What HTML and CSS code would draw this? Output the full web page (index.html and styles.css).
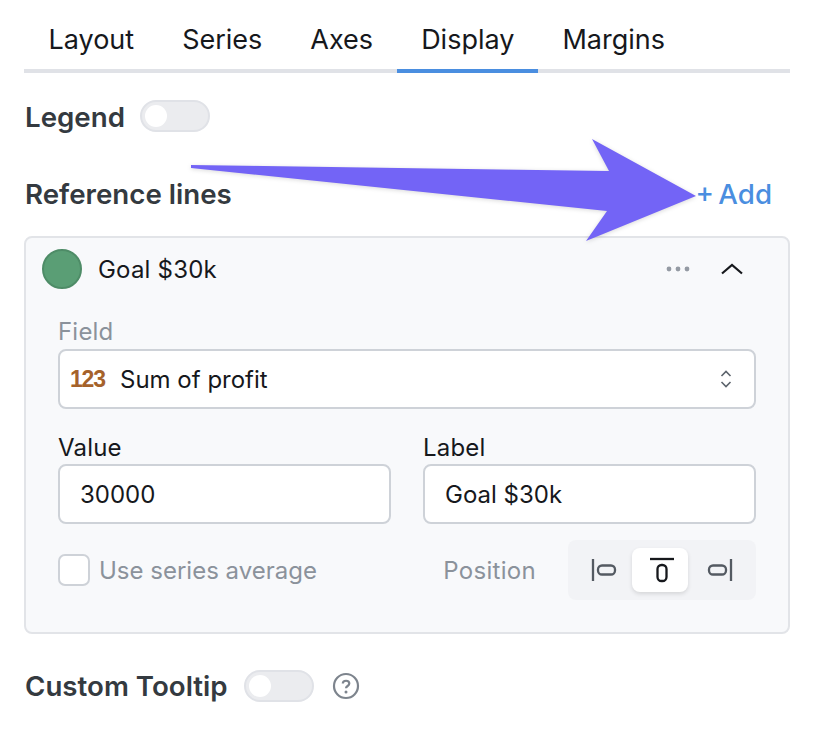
FILE: index.html
```html
<!DOCTYPE html>
<html lang="en">
<head>
  <meta charset="UTF-8">
  <title>Display settings</title>
  <link rel="stylesheet" href="styles.css">
</head>
<body>

<div class="panel">
  <div class="tabs">
    <div class="tab">Layout</div>
    <div class="tab">Series</div>
    <div class="tab">Axes</div>
    <div class="tab active">Display</div>
    <div class="tab">Margins</div>
  </div>

  <div class="row legend-row">
    <span class="heading">Legend</span>
    <span class="toggle"><span class="knob"></span></span>
  </div>

  <div class="row ref-row">
    <span class="heading">Reference lines</span>
    <span class="add">+ Add</span>
  </div>

  <div class="card">
    <div class="card-head">
      <span class="swatch"></span>
      <span class="card-title">Goal $30k</span>
      <svg class="dots" width="24" height="6" viewBox="0 0 24 6">
        <circle cx="3" cy="3" r="2.4" />
        <circle cx="12" cy="3" r="2.4" />
        <circle cx="21" cy="3" r="2.4" />
      </svg>
      <svg class="chevron" width="24" height="12" viewBox="0 0 24 12">
        <path d="M2 10.500 L12 2 L22 10.500" />
      </svg>
    </div>

    <label class="field-label muted">Field</label>
    <div class="input select">
      <span class="type-icon">123</span>
      <span class="select-text">Sum of profit</span>
      <svg class="updown" width="12" height="20" viewBox="0 0 12 20">
        <path d="M1.5 7 L6 2.5 L10.5 7 M1.5 13 L6 17.5 L10.5 13" />
      </svg>
    </div>

    <div class="two-col">
      <div>
        <label class="field-label">Value</label>
        <div class="input">30000</div>
      </div>
      <div>
        <label class="field-label">Label</label>
        <div class="input">Goal $30k</div>
      </div>
    </div>

    <div class="options">
      <div class="check-wrap">
        <span class="checkbox"></span>
        <span class="muted">Use series average</span>
      </div>
      <div class="position">
        <span class="muted pos-label">Position</span>
        <div class="segments">
          <div class="segment">
            <svg width="26" height="26" viewBox="0 0 26 26">
              <path d="M2 2 V24" />
              <rect x="7" y="8.5" width="17" height="9" rx="4" />
            </svg>
          </div>
          <div class="segment selected">
            <svg width="28" height="26" viewBox="0 0 28 26">
              <path d="M4 2 H28" />
              <rect x="11.500" y="8" width="9" height="16" rx="4" />
            </svg>
          </div>
          <div class="segment last">
            <svg width="26" height="26" viewBox="0 0 26 26">
              <path d="M24 2 V24" />
              <rect x="2" y="8.5" width="17" height="9" rx="4" />
            </svg>
          </div>
        </div>
      </div>
    </div>
  </div>

  <div class="row tooltip-row">
    <span class="heading">Custom Tooltip</span>
    <span class="toggle"><span class="knob"></span></span>
    <svg class="help" width="28" height="28" viewBox="0 0 28 28">
      <circle cx="14" cy="14" r="12" />
      <path d="M10.800 11.500 C10.800 7.800 17.300 7.800 17.300 11.500 C17.300 14 14 14 14 16.300" />
      <circle class="help-dot" cx="14" cy="20" r="1.500" />
    </svg>
  </div>
</div>

<!-- annotation arrow drawn on top of the screenshot -->
<svg class="arrow" width="836" height="734" viewBox="0 0 836 734">
  <polygon points="191,165 609,171 592,139 696,196 586,241 607,211 191,168" />
</svg>

</body>
</html>
```

FILE: styles.css
```css
body {
  margin: 0;
  background: #fff;
  font-family: Inter, "Noto Sans", sans-serif;
  color: #16181c;
}
.panel {
  width: 766px;
  margin-left: 24px;
}
.tabs {
  display: flex;
  height: 69px;
  padding-left: 0.5px;
  border-bottom: 4px solid #e0e2e7;
}
.tab {
  height: 73px;
  box-sizing: border-box;
  padding: 21px 24px 0;
  font-size: 27px;
  line-height: 38px;
}
.tab.active {
  border-bottom: 4px solid #4a8ee0;
}
.row {
  display: flex;
  align-items: center;
}
.legend-row {
  margin-top: 27px;
  height: 32px;
  gap: 15px;
}
.ref-row {
  justify-content: space-between;
  margin-top: 46px;
  height: 32px;
}
.heading {
  font-size: 27.7px;
  font-weight: 600;
  line-height: 34px;
  color: #343a40;
  padding-left: 1px;
}
.legend-row .heading {
  padding-top: 2px;
}
.add {
  font-size: 27.7px;
  font-weight: 500;
  word-spacing: -3px;
  color: #4a8ee0;
  padding-right: 18px;
}
.toggle {
  display: flex;
  align-items: center;
  box-sizing: border-box;
  width: 70px;
  height: 32px;
  padding-left: 3px;
  background: #ebecef;
  border: 2px solid #e0e2e7;
  border-radius: 16px;
}
.knob {
  width: 22px;
  height: 22px;
  background: #fff;
  border-radius: 50%;
}
.card {
  box-sizing: border-box;
  height: 398px;
  margin-top: 26px;
  padding: 0 32px 0 32px;
  background: #f8f9fb;
  border: 2px solid #e2e4e8;
  border-radius: 8px;
}
.card-head {
  display: flex;
  align-items: center;
  height: 62px;
  margin-left: -16px;
}
.swatch {
  box-sizing: border-box;
  width: 40px;
  height: 40px;
  margin-right: 16px;
  background: #5a9e75;
  border: 2px solid #4e8c67;
  border-radius: 50%;
}
.card-title {
  flex: 1;
  font-size: 24px;
  line-height: 30px;
  letter-spacing: 0.2px;
  padding-top: 2px;
}
.dots {
  fill: #949aa3;
  margin-right: 30px;
}
.chevron {
  fill: none;
  stroke: #16181c;
  stroke-width: 2.200;
  margin-right: 12px;
}
.field-label {
  display: block;
  height: 31px;
  font-size: 24px;
  line-height: 30px;
  letter-spacing: 0.2px;
}
.muted {
  color: #8b929b;
  font-size: 24px;
}
.card > .field-label {
  margin-top: 22px;
  margin-bottom: 8px;
  height: 19px;
  line-height: 19px;
}
.input {
  display: flex;
  align-items: center;
  box-sizing: border-box;
  height: 60px;
  padding-left: 20px;
  background: #fff;
  border: 2px solid #ced2d8;
  border-radius: 8px;
  font-size: 24px;
}
.select {
  padding-left: 10px;
  padding-right: 22px;
}
.type-icon {
  width: 36px;
  margin-right: 14px;
  color: #a5622b;
  font-family: "Liberation Sans", sans-serif;
  font-size: 23px;
  font-weight: 700;
  letter-spacing: -1.200px;
}
.select-text {
  flex: 1;
}
.updown {
  fill: none;
  stroke: #5c636c;
  stroke-width: 1.600;
}
.two-col {
  display: grid;
  grid-template-columns: 333px 333px;
  gap: 32px;
  margin-top: 24px;
}
.options {
  display: flex;
  justify-content: space-between;
  align-items: center;
  margin-top: 16px;
}
.check-wrap {
  display: flex;
  align-items: center;
  gap: 9px;
}
.checkbox {
  box-sizing: border-box;
  width: 32px;
  height: 32px;
  background: #fff;
  border: 2px solid #ced2d8;
  border-radius: 7px;
}
.position {
  display: flex;
  align-items: center;
  gap: 32px;
}
.pos-label {
  letter-spacing: 0.3px;
}
.segments {
  display: flex;
  align-items: center;
  box-sizing: border-box;
  width: 188px;
  height: 60px;
  padding: 8px;
  background: #f2f3f6;
  border-radius: 8px;
}
.segment {
  display: flex;
  align-items: center;
  justify-content: center;
  width: 56px;
  height: 44px;
}
.segment.last {
  margin-left: 4px;
}
.segment svg {
  fill: none;
  stroke: #545a62;
  stroke-width: 2.300;
}
.segment.selected {
  background: #fff;
  border-radius: 8px;
  box-shadow: 0 2px 4px rgba(0, 0, 0, 0.12);
}
.segment.selected svg {
  stroke: #16181c;
}
.tooltip-row {
  margin-top: 36px;
  height: 32px;
  gap: 16px;
}
.help {
  fill: none;
  stroke: #7d848d;
  stroke-width: 2.200;
  margin-left: 2px;
}
.help .help-dot {
  fill: #7d848d;
  stroke: none;
}
.arrow {
  position: absolute;
  top: 0;
  left: 0;
  fill: #7364f6;
  filter: drop-shadow(0 1px 2px rgba(0, 0, 0, 0.15));
}
```
